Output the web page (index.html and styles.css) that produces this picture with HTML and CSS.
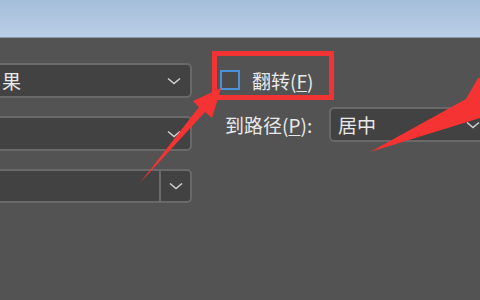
FILE: index.html
```html
<!DOCTYPE html>
<html lang="zh">
<head>
<meta charset="utf-8">
<link rel="stylesheet" href="styles.css">
</head>
<body>
<div class="titlebar"></div>
<div class="content">
  <div class="left-col">
    <div class="select select-first">
      <span class="select-text">果</span>
      <svg class="chev" viewBox="0 0 14 8" width="14" height="8"><path d="M1 1.5 L7 6.5 L13 1.5"/></svg>
    </div>
    <div class="select">
      <span class="select-text"></span>
      <svg class="chev" viewBox="0 0 14 8" width="14" height="8"><path d="M1 1.5 L7 6.5 L13 1.5"/></svg>
    </div>
    <div class="combo">
      <span class="combo-field"></span>
      <span class="combo-btn">
        <svg class="chev" viewBox="0 0 14 8" width="14" height="8"><path d="M1 1.5 L7 6.5 L13 1.5"/></svg>
      </span>
    </div>
  </div>
  <div class="right-col">
    <div class="flip-box">
      <span class="checkbox"></span>
      <span class="label">翻转(<u>F</u>)</span>
    </div>
    <div class="path-row">
      <span class="label path-label">到路径(<u>P</u>):</span>
      <div class="select select-wide">
        <span class="select-text">居中</span>
        <svg class="chev" viewBox="0 0 14 8" width="14" height="8"><path d="M1 1.5 L7 6.5 L13 1.5"/></svg>
      </div>
    </div>
  </div>
</div>
<svg class="arrows" viewBox="0 0 480 300" width="480" height="300">
  <polygon points="140,183 199,107 193,101 221,88 212,118 205,112"/>
  <polygon points="370,152 466,99 478,78 480,78 480,118"/>
</svg>
</body>
</html>
```

FILE: styles.css
```css
html, body {
  margin: 0;
  padding: 0;
}
body {
  width: 480px;
  height: 300px;
  overflow: hidden;
  position: relative;
  background: #535353;
  font-family: "Noto Sans CJK SC", "Noto Sans", sans-serif;
  color: #e8e8e8;
}
.titlebar {
  height: 37px;
  background: linear-gradient(#a5bed9, #b9cee7);
  border-bottom: 1px solid #8d98a3;
}
.content {
  display: flex;
}
.left-col {
  flex: none;
  margin-left: -40px;
  margin-top: 25px;
  width: 232px;
  display: flex;
  flex-direction: column;
  gap: 18px;
}
.select {
  box-sizing: border-box;
  height: 35px;
  background: #424242;
  border: 2px solid #696969;
  border-radius: 5px;
  display: flex;
  align-items: center;
  justify-content: space-between;
  padding: 0 9px 0 21px;
}
.select-first {
  padding-left: 40px;
}
.select-text {
  font-size: 19px;
  line-height: 1;
  white-space: nowrap;
}
.chev {
  display: block;
  flex: none;
}
.chev path {
  fill: none;
  stroke: #cfcfcf;
  stroke-width: 1.6;
}
.combo {
  box-sizing: border-box;
  height: 34px;
  background: #424242;
  border: 2px solid #696969;
  border-radius: 5px;
  display: flex;
}
.combo-field {
  flex: 1;
  border-right: 2px solid #696969;
}
.combo-btn {
  width: 29px;
  display: flex;
  align-items: center;
  justify-content: center;
}
.right-col {
  flex: none;
  margin-left: 20px;
  margin-top: 13px;
  display: flex;
  flex-direction: column;
  gap: 7px;
}
.flip-box {
  box-sizing: border-box;
  width: 122px;
  height: 49px;
  border: 5px solid #f23333;
  display: flex;
  align-items: center;
  padding: 9px 0 0 3px;
}
.checkbox {
  box-sizing: border-box;
  width: 20px;
  height: 20px;
  border: 2px solid #4a93db;
  background: #4a4a4a;
  flex: none;
}
.label {
  font-size: 19px;
  line-height: 1;
  white-space: nowrap;
  margin-left: 12px;
}
.label u {
  text-underline-offset: 2px;
}
.path-row {
  display: flex;
  align-items: center;
}
.path-label {
  width: 104px;
  margin-left: 13px;
  flex: none;
}
.select-wide {
  width: 161px;
  flex: none;
  padding: 0 8px 0 7px;
}
.arrows {
  position: absolute;
  left: 0;
  top: 0;
  pointer-events: none;
}
.arrows polygon {
  fill: #f53333;
}
```
